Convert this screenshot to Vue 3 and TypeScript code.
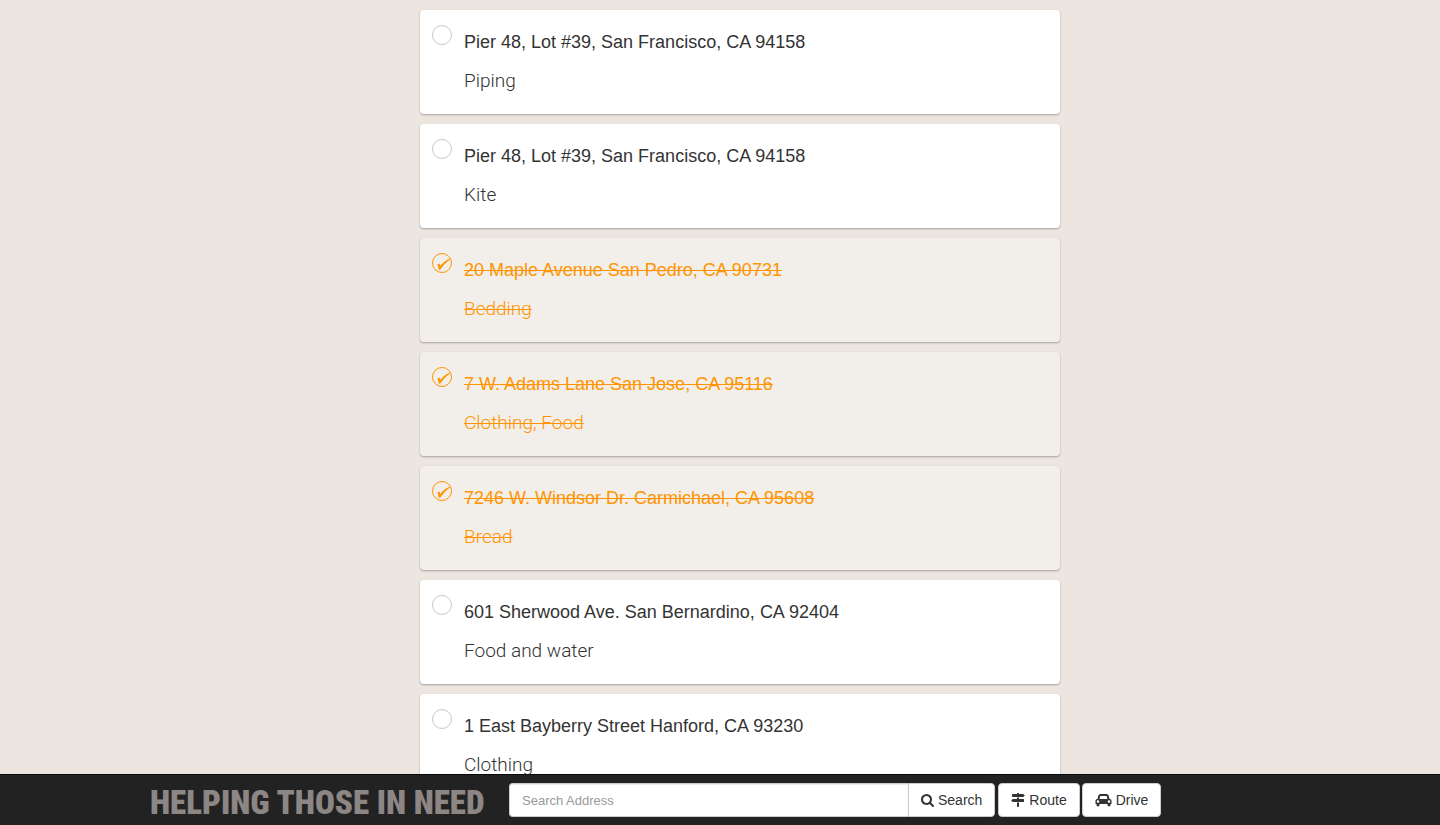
<script setup lang="ts">
import { ref } from 'vue'

interface Request {
  id: number
  address: string
  need: string
  done: boolean
}

const requests = ref<Request[]>([
  { id: 1, address: 'Pier 48, Lot #39, San Francisco, CA 94158', need: 'Piping', done: false },
  { id: 2, address: 'Pier 48, Lot #39, San Francisco, CA 94158', need: 'Kite', done: false },
  { id: 3, address: '20 Maple Avenue San Pedro, CA 90731', need: 'Bedding', done: true },
  { id: 4, address: '7 W. Adams Lane San Jose, CA 95116', need: 'Clothing, Food', done: true },
  { id: 5, address: '7246 W. Windsor Dr. Carmichael, CA 95608', need: 'Bread', done: true },
  { id: 6, address: '601 Sherwood Ave. San Bernardino, CA 92404', need: 'Food and water', done: false },
  { id: 7, address: '1 East Bayberry Street Hanford, CA 93230', need: 'Clothing', done: false },
])

const query = ref('')
</script>

<template>
  <div class="page">
    <main class="scroller">
      <ul class="list">
        <li v-for="item in requests" :key="item.id" class="card" :class="{ done: item.done }">
          <span class="check">
            <input :id="`request-${item.id}`" v-model="item.done" type="checkbox" />
            <svg v-if="item.done" viewBox="0 0 20 20" aria-hidden="true">
              <path d="M5.400 11.400 7.200 10.600Q8 11.600 8.300 13 11.500 8.200 18 5.400L18.400 6Q12.400 10.400 8.400 16.400L6.800 16.800Q6.400 13.600 5.400 11.400Z" />
            </svg>
          </span>
          <label class="details" :for="`request-${item.id}`">
            <span class="address">{{ item.address }}</span>
            <span class="need">{{ item.need }}</span>
          </label>
        </li>
      </ul>
    </main>

    <nav class="navbar">
      <div class="container">
        <a class="brand" href="#">HELPING THOSE IN NEED</a>
        <form class="tools" @submit.prevent>
          <div class="search">
            <input v-model="query" type="text" placeholder="Search Address" aria-label="Search Address" />
            <button type="submit" class="btn">
              <svg class="icon-search" viewBox="64 128 1664 1664" aria-hidden="true">
                <path d="M1216 832q0-185-131.500-316.500t-316.500-131.500-316.500 131.500-131.500 316.500 131.500 316.500 316.500 131.500 316.500-131.500 131.500-316.500zm512 832q0 52-38 90t-90 38q-54 0-90-38l-343-342q-179 124-399 124-143 0-273.500-55.500t-225-150-150-225-55.500-273.500 55.500-273.500 150-225 225-150 273.500-55.500 273.500 55.500 225 150 150 225 55.500 273.500q0 220-124 399l343 343q37 37 37 90z" />
              </svg>
              Search
            </button>
          </div>
          <button type="button" class="btn">
            <svg class="icon-route" viewBox="0 0 1792 1792" aria-hidden="true">
              <path d="M1745 297q10 10 10 23t-10 23l-141 141q-28 28-68 28h-1344q-26 0-45-19t-19-45v-256q0-26 19-45t45-19h576v-64q0-26 19-45t45-19h128q26 0 45 19t19 45v64h512q40 0 68 28zm-977 919h256v512q0 26-19 45t-45 19h-128q-26 0-45-19t-19-45v-512zm832-448q26 0 45 19t19 45v256q0 26-19 45t-45 19h-1344q-40 0-68-28l-141-141q-10-10-10-23t10-23l141-141q28-28 68-28h512v-192h256v192h576z" />
            </svg>
            Route
          </button>
          <button type="button" class="btn">
            <svg class="icon-drive" viewBox="0 0 2048 1792" aria-hidden="true">
              <path d="M480 1088q0-66-47-113t-113-47-113 47-47 113 47 113 113 47 113-47 47-113zm36-320h1016l-89-357q-2-8-14-17.500t-21-9.500h-768q-9 0-21 9.500t-14 17.500zm1372 320q0-66-47-113t-113-47-113 47-47 113 47 113 113 47 113-47 47-113zm160-96v384q0 14-9 23t-23 9h-96v128q0 80-56 136t-136 56-136-56-56-136v-128h-1024v128q0 80-56 136t-136 56-136-56-56-136v-128h-96q-14 0-23-9t-9-23v-384q0-93 65.500-158.500t158.500-65.500h28l105-419q23-94 104-157.500t179-63.500h768q98 0 179 63.500t104 157.500l105 419h28q93 0 158.500 65.500t65.500 158.500z" />
            </svg>
            Drive
          </button>
        </form>
      </div>
    </nav>
  </div>
</template>

<style>
body {
  margin: 0;
  background: #ede5df;
}
</style>

<style scoped>
.page {
  display: flex;
  flex-direction: column;
  height: 100vh;
  font-family: "Liberation Sans", Arial, sans-serif;
  color: #333;
}

.scroller {
  flex: 1;
  min-height: 0;
  overflow-y: auto;
  scrollbar-width: none;
}

.list {
  box-sizing: border-box;
  max-width: 680px;
  margin: 0 auto;
  padding: 10px 0 10px 40px;
  display: flex;
  flex-direction: column;
  gap: 10px;
  list-style: none;
}

.card {
  display: flex;
  gap: 12px;
  padding: 15px 12px 21px;
  background: #fff;
  border-radius: 4px;
  box-shadow: 0 1px 2px rgba(0, 0, 0, 0.3);
}

.card.done {
  background: #f2eeea;
  color: #ff9500;
}

.check {
  display: grid;
  width: 20px;
  height: 20px;
}

.check input,
.check svg {
  grid-area: 1 / 1;
  width: 20px;
  height: 20px;
  margin: 0;
}

.check input {
  box-sizing: border-box;
  appearance: none;
  border: 1px solid #c8c8c8;
  border-radius: 50%;
}

.done .check input {
  border-color: #ff9500;
}

.check svg {
  fill: #ff9500;
  pointer-events: none;
}

.details {
  display: flex;
  flex-direction: column;
  gap: 14px;
  padding-top: 5px;
}

.address {
  font-size: 18px;
  line-height: 24px;
}

.need {
  font-family: Roboto, "Liberation Sans", sans-serif;
  font-size: 19px;
  font-weight: 300;
  line-height: 25px;
}

.done .address,
.done .need {
  text-decoration: line-through;
  text-decoration-thickness: 1px;
}

.navbar {
  border-top: 1px solid #090909;
  background: #222;
}

.container {
  box-sizing: border-box;
  max-width: 1170px;
  height: 50px;
  margin: 0 auto;
  padding: 0 15px;
  display: flex;
  align-items: center;
  gap: 24px;
}

.brand {
  width: 335px;
  padding-top: 6px;
  font-family: "Liberation Sans Narrow", "Roboto Condensed", "Open Sans Condensed", Roboto, sans-serif;
  font-size: 33px;
  font-weight: 900;
  line-height: 40px;
  white-space: nowrap;
  color: #8c8684;
  text-decoration: none;
}

.tools {
  display: flex;
  gap: 2px;
}

.search {
  display: flex;
}

.search input {
  box-sizing: border-box;
  width: 399px;
  height: 34px;
  padding: 6px 12px;
  border: 1px solid #ccc;
  border-right: 0;
  border-radius: 4px 0 0 4px;
  background: #fff;
  box-shadow: inset 0 1px 1px rgba(0, 0, 0, 0.08);
  font: 13px/20px "Liberation Sans", Arial, sans-serif;
  color: #555;
}

.search input::placeholder {
  color: #999;
  opacity: 1;
}

.btn {
  display: flex;
  align-items: center;
  gap: 4px;
  height: 34px;
  padding: 6px 12px;
  border: 1px solid #ccc;
  border-radius: 4px;
  background: #fff;
  font: 14px/20px "Liberation Sans", Arial, sans-serif;
  color: #333;
  cursor: pointer;
}

.search .btn {
  margin-right: 1px;
  border-radius: 0 4px 4px 0;
}

.btn svg {
  height: 14px;
  fill: currentColor;
}

.btn .icon-search {
  width: 13px;
  height: 13px;
}

.icon-route {
  width: 14px;
}

.icon-drive {
  width: 17px;
}
</style>
